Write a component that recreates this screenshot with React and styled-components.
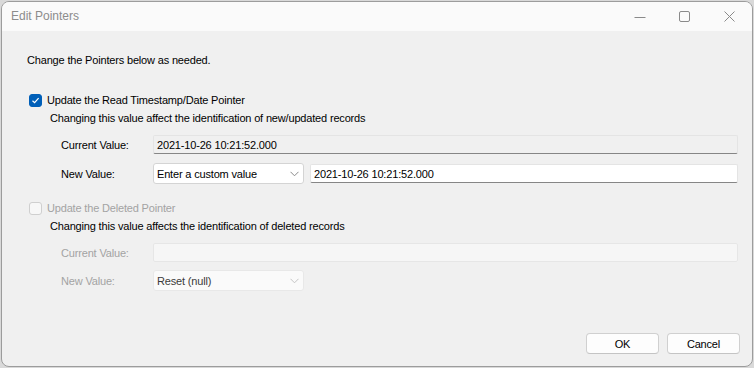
import React from 'react';
import styled, { createGlobalStyle } from 'styled-components';

const Global = createGlobalStyle`
  html, body {
    margin: 0;
    padding: 0;
    background: #d9d9d9;
  }
  body {
    font-family: "Liberation Sans", Arial, sans-serif;
    font-size: 11px;
    letter-spacing: -0.17px;
    color: #000;
  }
`;

const Window = styled.div`
  box-sizing: border-box;
  width: 752px;
  height: 366px;
  margin: 1px;
  border: 1px solid #9c9c9c;
  border-radius: 8px;
  background: #f0f0f0;
  overflow: hidden;
  display: flex;
  flex-direction: column;
`;

const TitleBar = styled.div`
  height: 29px;
  background: #fafafa;
  display: flex;
  align-items: center;
  padding-left: 9px;
  flex-shrink: 0;
`;

const Title = styled.div`
  flex: 1;
  font-size: 12px;
  letter-spacing: 0;
  color: #8c8c8c;
  padding-bottom: 1px;
`;

const Caption = styled.div`
  width: 45px;
  height: 29px;
  display: flex;
  align-items: center;
  justify-content: center;
`;

const Body = styled.div`
  flex: 1;
  display: flex;
  flex-direction: column;
  padding: 23px 14px 12px 25px;
`;

const Intro = styled.div`
  line-height: 13px;
  margin-bottom: 26px;
`;

const Section = styled.div`
  display: flex;
  flex-direction: column;
  margin-bottom: ${p => p.$gap || 0}px;
`;

const CheckRow = styled.label`
  display: flex;
  align-items: center;
  gap: 5px;
  height: 14px;
  margin-left: 2px;
  color: ${p => (p.$disabled ? '#a3a3a3' : '#000')};
`;

const Box = styled.span`
  box-sizing: border-box;
  width: 13px;
  height: 13px;
  border-radius: 3px;
  display: flex;
  align-items: center;
  justify-content: center;
  background: ${p => (p.$checked ? '#005fb8' : '#f7f7f7')};
  border: 1px solid ${p => (p.$checked ? '#005fb8' : '#cfcfcf')};
`;

const Hint = styled.div`
  line-height: 13px;
  margin: 5px 0 10px 23px;
`;

const Field = styled.div`
  display: grid;
  grid-template-columns: 92px 1fr;
  align-items: center;
  margin-left: 34px;
  margin-bottom: ${p => p.$gap || 0}px;
`;

const Label = styled.div`
  color: ${p => (p.$disabled ? '#a3a3a3' : '#000')};
`;

const Inputs = styled.div`
  display: flex;
  gap: 6px;
  align-items: center;
`;

const TextBox = styled.div`
  box-sizing: border-box;
  flex: 1;
  height: 19px;
  display: flex;
  align-items: center;
  padding-left: 3px;
  border: 1px solid ${p => (p.$disabled ? '#e6e6e6' : '#e4e4e4')};
  border-bottom-color: ${p => (p.$disabled ? '#e6e6e6' : '#868686')};
  border-radius: 2px;
  background: ${p => (p.$readonly ? '#f0f0f0' : p.$disabled ? '#f6f6f6' : '#fff')};
  color: #000;
`;

const Combo = styled.div`
  box-sizing: border-box;
  width: 151px;
  height: 21px;
  display: flex;
  align-items: center;
  justify-content: space-between;
  padding: 0 4px 0 3px;
  border: 1px solid ${p => (p.$disabled ? '#e8e8e8' : '#d4d4d4')};
  border-radius: 3px;
  background: ${p => (p.$disabled ? '#fafafa' : '#fff')};
  color: ${p => (p.$disabled ? '#3a3a3a' : '#000')};
`;

const Footer = styled.div`
  margin-top: auto;
  margin-right: -2px;
  display: flex;
  justify-content: flex-end;
  gap: 8px;
`;

const Button = styled.button`
  box-sizing: border-box;
  width: 73px;
  height: 21px;
  border: 1px solid #d0d0d0;
  border-bottom-color: #c4c4c4;
  border-radius: 4px;
  background: #fdfdfd;
  font-family: inherit;
  font-size: 11px;
  letter-spacing: inherit;
  color: #000;
  padding: 0;
`;

const Check = () => (
  <svg width="9" height="9" viewBox="0 0 9 9">
    <path d="M1.5 4.7 L3.6 6.6 L7.6 2.2" fill="none" stroke="#fff" strokeWidth="1.2" />
  </svg>
);

const Chevron = ({ color }) => (
  <svg width="9" height="6" viewBox="0 0 9 6">
    <path d="M0.5 0.8 L4.5 4.8 L8.5 0.8" fill="none" stroke={color} strokeWidth="1" />
  </svg>
);

export default function App() {
  return (
    <>
      <Global />
      <Window>
        <TitleBar>
          <Title>Edit Pointers</Title>
          <Caption>
            <svg width="12" height="12" viewBox="0 0 12 12">
              <path d="M0.5 6.5 H11.5" stroke="#8a8a8a" strokeWidth="1" />
            </svg>
          </Caption>
          <Caption>
            <svg width="11" height="11" viewBox="0 0 11 11">
              <rect x="0.5" y="0.5" width="10" height="10" rx="1.5" fill="none" stroke="#8a8a8a" />
            </svg>
          </Caption>
          <Caption>
            <svg width="11" height="11" viewBox="0 0 11 11">
              <path d="M0.5 0.5 L10.5 10.5 M10.5 0.5 L0.5 10.5" stroke="#8a8a8a" strokeWidth="1" />
            </svg>
          </Caption>
        </TitleBar>
        <Body>
          <Intro>Change the Pointers below as needed.</Intro>

          <Section $gap={17}>
            <CheckRow>
              <Box $checked><Check /></Box>
              Update the Read Timestamp/Date Pointer
            </CheckRow>
            <Hint>Changing this value affect the identification of new/updated records</Hint>
            <Field $gap={9}>
              <Label>Current Value:</Label>
              <Inputs>
                <TextBox $readonly>2021-10-26 10:21:52.000</TextBox>
              </Inputs>
            </Field>
            <Field>
              <Label>New Value:</Label>
              <Inputs>
                <Combo>
                  Enter a custom value
                  <Chevron color="#8a8a8a" />
                </Combo>
                <TextBox>2021-10-26 10:21:52.000</TextBox>
              </Inputs>
            </Field>
          </Section>

          <Section>
            <CheckRow $disabled>
              <Box />
              Update the Deleted Pointer
            </CheckRow>
            <Hint>Changing this value affects the identification of deleted records</Hint>
            <Field $gap={8}>
              <Label $disabled>Current Value:</Label>
              <Inputs>
                <TextBox $disabled />
              </Inputs>
            </Field>
            <Field>
              <Label $disabled>New Value:</Label>
              <Inputs>
                <Combo $disabled>
                  Reset (null)
                  <Chevron color="#c4c4c4" />
                </Combo>
              </Inputs>
            </Field>
          </Section>

          <Footer>
            <Button>OK</Button>
            <Button>Cancel</Button>
          </Footer>
        </Body>
      </Window>
    </>
  );
}
